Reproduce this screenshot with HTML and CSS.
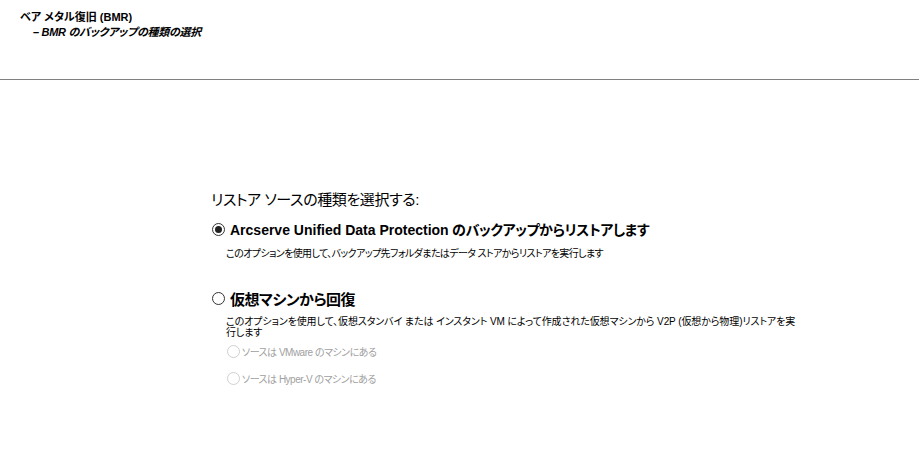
FILE: index.html
```html
<!DOCTYPE html>
<html lang="ja">
<head>
<meta charset="utf-8">
<title>BMR</title>
<link rel="stylesheet" href="styles.css">
</head>
<body>
<header class="header">
  <div class="title">ベア メタル復旧 (BMR)</div>
  <div class="subtitle">– BMR のバックアップの種類の選択</div>
</header>
<main class="main">
  <div class="heading">リストア ソースの種類を選択する:</div>
  <div class="option option-first">
    <span class="radio checked"></span>
    <span class="option-label"><span class="latin">Arcserve Unified Data Protection</span> のバックアップからリストアします</span>
  </div>
  <div class="desc">このオプションを使用して、バックアップ先フォルダまたはデータ ストアからリストアを実行します</div>
  <div class="option option-second">
    <span class="radio"></span>
    <span class="option-label big">仮想マシンから回復</span>
  </div>
  <div class="desc desc-wrap">このオプションを使用して、仮想スタンバイ または インスタント VM によって作成された仮想マシンから V2P (仮想から物理)リストアを実行します</div>
  <div class="sub-option sub-first">
    <span class="radio disabled"></span>
    <span class="sub-label">ソースは VMware のマシンにある</span>
  </div>
  <div class="sub-option sub-second">
    <span class="radio disabled"></span>
    <span class="sub-label">ソースは Hyper-V のマシンにある</span>
  </div>
</main>
</body>
</html>
```
FILE: styles.css
```css
* { box-sizing: border-box; }
html, body { margin: 0; padding: 0; background: #fff; }
body {
  font-family: "Liberation Sans", "Noto Sans CJK JP", sans-serif;
  color: #000;
  font-feature-settings: "palt";
}
.header {
  height: 80px;
  padding: 10px 0 0 20px;
  border-bottom: 1px solid #808080;
}
.title {
  font-size: 11px;
  line-height: 15px;
  font-weight: bold;
  letter-spacing: 0;
}
.subtitle {
  font-size: 11px;
  line-height: 15px;
  font-weight: bold;
  font-style: italic;
  padding-left: 13px;
  letter-spacing: -0.3px;
}
.main {
  padding: 111px 0 0 211px;
}
.heading {
  font-size: 15px;
  line-height: 18px;
  letter-spacing: -0.4px;
}
.option {
  display: flex;
  align-items: center;
  gap: 5px;
  height: 20px;
  padding-left: 1px;
}
.option-first { margin-top: 10px; }
.option-second { margin-top: 29px; }
.option-label {
  font-size: 14px;
  font-weight: bold;
  letter-spacing: -0.4px;
}
.option-label .latin { letter-spacing: 0; }
.option-label.big {
  font-size: 15px;
  letter-spacing: -0.5px;
}
.radio {
  width: 13px;
  height: 13px;
  border-radius: 50%;
  border: 1px solid #333;
  background: #fff;
  display: inline-flex;
  align-items: center;
  justify-content: center;
  flex: none;
}
.radio.checked::after {
  content: "";
  width: 7px;
  height: 7px;
  border-radius: 50%;
  background: #222;
}
.radio.disabled { border-color: #d0d0d0; }
.desc {
  font-size: 10px;
  line-height: 11px;
  padding-left: 15px;
  margin-top: 9px;
  letter-spacing: -0.6px;
}
.desc-wrap {
  margin-top: 8px;
  width: 590px;
  letter-spacing: -0.1px;
}
.sub-option {
  display: flex;
  align-items: center;
  gap: 2px;
  height: 14px;
  padding-left: 16px;
  color: #a0a0a0;
  font-size: 10px;
}
.sub-first { margin-top: 6px; }
.sub-second { margin-top: 13px; }
.sub-label { letter-spacing: -0.5px; }
```
